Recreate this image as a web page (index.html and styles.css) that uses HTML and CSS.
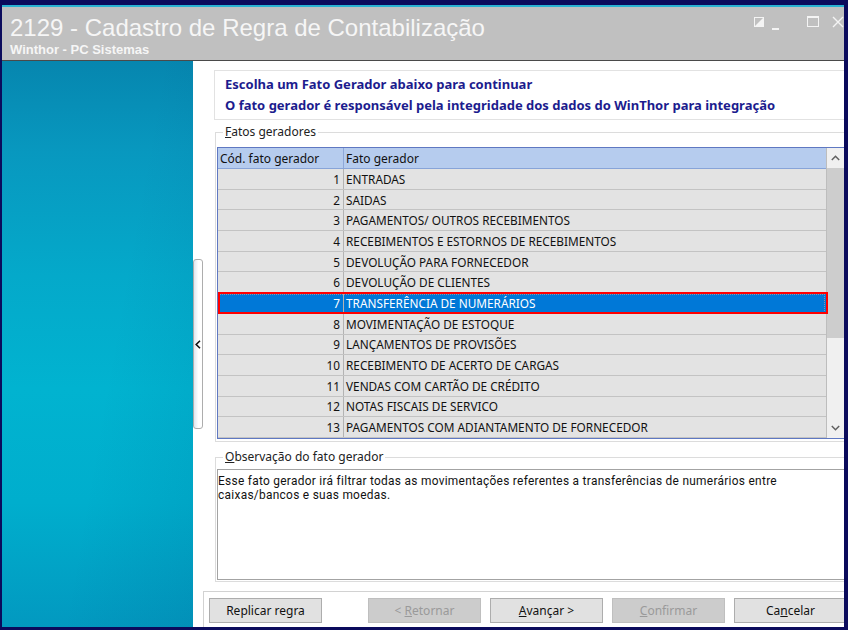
FILE: index.html
```html
<!DOCTYPE html>
<html lang="pt-BR">
<head>
<meta charset="utf-8">
<title>2129 - Cadastro de Regra de Contabilização</title>
<link rel="stylesheet" href="styles.css">
</head>
<body>
<div class="window">
  <header class="titlebar">
    <div class="title-text">
      <div class="title">2129 - Cadastro de Regra de Contabilização</div>
      <div class="subtitle">Winthor - PC Sistemas</div>
    </div>
    <div class="controls">
      <svg class="ctl ctl-dock" width="10" height="10" viewBox="0 0 10 10"><rect x="0.5" y="0.5" width="9" height="9" fill="none" stroke="#f4f4f4"/><polygon points="9,1 9,9 1,9" fill="#f4f4f4"/></svg>
      <svg class="ctl ctl-min" width="8" height="12" viewBox="0 0 8 12"><rect x="0" y="10" width="7" height="2" fill="#f4f4f4"/></svg>
      <svg class="ctl ctl-max" width="12" height="11" viewBox="0 0 12 11"><rect x="0.5" y="1" width="11" height="9.5" fill="none" stroke="#f4f4f4"/><rect x="0" y="0" width="12" height="2" fill="#f4f4f4"/></svg>
      <svg class="ctl ctl-close" width="12" height="12" viewBox="0 0 12 12"><path d="M1 1 L11 11 M11 1 L1 11" stroke="#f4f4f4" stroke-width="1.4"/></svg>
    </div>
  </header>

  <div class="main">
    <aside class="sidebar"></aside>
    <div class="grip-col">
      <div class="grip"><svg width="6" height="9" viewBox="0 0 6 9"><polyline points="5,0.8 1.2,4.5 5,8.2" fill="none" stroke="#111" stroke-width="1.6"/></svg></div>
    </div>

    <section class="content">
      <div class="intro">
        <div>Escolha um Fato Gerador abaixo para continuar</div>
        <div>O fato gerador é responsável pela integridade dos dados do WinThor para integração</div>
      </div>

      <fieldset class="group group-events">
        <legend><u>F</u>atos geradores</legend>
        <div class="grid">
          <div class="table">
            <div class="thead">
              <div class="cell num">Cód. fato gerador</div>
              <div class="cell name">Fato gerador</div>
            </div>
            <div class="row"><div class="cell num">1</div><div class="cell name">ENTRADAS</div></div>
            <div class="row"><div class="cell num">2</div><div class="cell name">SAIDAS</div></div>
            <div class="row"><div class="cell num">3</div><div class="cell name">PAGAMENTOS/ OUTROS RECEBIMENTOS</div></div>
            <div class="row"><div class="cell num">4</div><div class="cell name">RECEBIMENTOS E ESTORNOS DE RECEBIMENTOS</div></div>
            <div class="row"><div class="cell num">5</div><div class="cell name">DEVOLUÇÃO PARA FORNECEDOR</div></div>
            <div class="row"><div class="cell num">6</div><div class="cell name">DEVOLUÇÃO DE CLIENTES</div></div>
            <div class="row selected"><div class="cell num">7</div><div class="cell name">TRANSFERÊNCIA DE NUMERÁRIOS</div></div>
            <div class="row"><div class="cell num">8</div><div class="cell name">MOVIMENTAÇÃO DE ESTOQUE</div></div>
            <div class="row"><div class="cell num">9</div><div class="cell name">LANÇAMENTOS DE PROVISÕES</div></div>
            <div class="row"><div class="cell num">10</div><div class="cell name">RECEBIMENTO DE ACERTO DE CARGAS</div></div>
            <div class="row"><div class="cell num">11</div><div class="cell name">VENDAS COM CARTÃO DE CRÉDITO</div></div>
            <div class="row"><div class="cell num">12</div><div class="cell name">NOTAS FISCAIS DE SERVICO</div></div>
            <div class="row"><div class="cell num">13</div><div class="cell name">PAGAMENTOS COM ADIANTAMENTO DE FORNECEDOR</div></div>
          </div>
          <div class="scroll">
            <div class="arrow"><svg width="9" height="6" viewBox="0 0 9 6"><polyline points="0.8,5 4.5,1.3 8.2,5" fill="none" stroke="#606060" stroke-width="1.5"/></svg></div>
            <div class="thumb"></div>
            <div class="track"></div>
            <div class="arrow"><svg width="9" height="6" viewBox="0 0 9 6"><polyline points="0.8,1 4.5,4.7 8.2,1" fill="none" stroke="#606060" stroke-width="1.5"/></svg></div>
          </div>
        </div>
      </fieldset>

      <fieldset class="group group-notes">
        <legend><u>O</u>bservação do fato gerador</legend>
        <div class="memo">Esse fato gerador irá filtrar todas as movimentações referentes a transferências de numerários entre<br>caixas/bancos e suas moedas.</div>
      </fieldset>

      <div class="buttons">
        <button class="btn" type="button">Replicar regra</button>
        <button class="btn btn-back" type="button" disabled>&lt; <u>R</u>etornar</button>
        <button class="btn" type="button"><u>A</u>vançar &gt;</button>
        <button class="btn" type="button" disabled><u>C</u>onfirmar</button>
        <button class="btn" type="button">Ca<u>n</u>celar</button>
      </div>
    </section>
  </div>
</div>
</body>
</html>
```
FILE: styles.css
```css
* { box-sizing: border-box; }

html, body {
  margin: 0;
  height: 100%;
}

body {
  background: #0b0b5c;
  overflow: hidden;
  font-family: "Noto Sans", "DejaVu Sans", sans-serif;
  font-size: 12px;
  color: #111;
}

.window {
  margin: 5px 0 0 2px;
  width: 842px;
  height: 622px;
  border-top: 2px solid #2ab2d2;
  background: #fff;
  display: flex;
  flex-direction: column;
  overflow: hidden;
}

/* ---- title bar ---- */
.titlebar {
  height: 54px;
  flex: none;
  background: #c0c0c0;
  border-bottom: 1px solid #4a4a4a;
  display: flex;
  padding-left: 8px;
  color: #f6f6f6;
}

.title-text {
  display: flex;
  flex-direction: column;
  padding-top: 7px;
}

.title {
  font: 24px/28px "Liberation Sans", Arial, sans-serif;
}

.subtitle {
  font: bold 13px/15px "Liberation Sans", Arial, sans-serif;
}

.controls {
  margin-left: auto;
  display: flex;
  align-items: flex-start;
  padding-top: 9px;
}

.ctl { display: block; }
.ctl-dock { margin-top: 1px; }
.ctl-min { margin-left: 8px; margin-top: 2px; }
.ctl-max { margin-left: 27px; margin-top: 0; }
.ctl-close { margin-left: 13px; margin-top: 0; }

/* ---- body ---- */
.main {
  flex: 1;
  display: flex;
  min-height: 0;
}

.sidebar {
  width: 191px;
  flex: none;
  background:
    linear-gradient(100deg, rgba(0, 40, 90, 0) 55%, rgba(0, 40, 90, 0.08) 100%),
    linear-gradient(180deg, #0686af 0%, #0898bf 16%, #04a9ca 38%, #01b3d0 58%, #00aecd 78%, #0299c0 100%);
}

.grip-col {
  width: 10px;
  flex: none;
  display: flex;
  align-items: center;
}

.grip {
  width: 10px;
  height: 170px;
  border: 1px solid #adadad;
  border-radius: 3px;
  background: linear-gradient(90deg, #dde6ee 0%, #ffffff 55%);
  display: flex;
  align-items: center;
  justify-content: center;
}

.grip svg { display: block; margin-left: -1px; }

.content {
  flex: 1;
  min-width: 0;
  display: flex;
  flex-direction: column;
  overflow: hidden;
}

.intro {
  margin: 9px -4px 0 11px;
  border: 1px solid #e2e2e2;
  padding: 3px 10px;
  color: #1c1c8e;
  font-weight: bold;
  font-size: 13px;
  line-height: 21px;
  white-space: nowrap;
}

/* ---- group boxes ---- */
.group {
  margin: 4px -1px 0 12px;
  border: 1px solid #dcdcdc;
  border-right: none;
  padding: 7px 0 2px 1px;
  min-width: 0;
}

.group legend {
  margin-left: 6px;
  padding: 0 2px;
  line-height: 16px;
  font-size: 12px;
  color: #222;
}

.group-notes {
  margin-top: 7px;
  padding: 4px 0 1px 1px;
}

/* ---- grid ---- */
.grid {
  height: 292px;
  border: 1px solid #5f78c2;
  display: flex;
  background: #fff;
}

.table {
  flex: 1;
  display: flex;
  flex-direction: column;
  min-width: 0;
}

.thead {
  height: 21px;
  flex: none;
  display: flex;
  background: #b6ccee;
  border-bottom: 1px solid #88a4d8;
}

.thead .cell {
  display: flex;
  align-items: center;
  padding-left: 2px;
}

.thead .num {
  width: 126px;
  border-right: 1px solid #8ea8d8;
}

.row {
  flex: 1;
  display: flex;
  background: #e3e3e3;
  border-bottom: 1px solid #c3c3c3;
  position: relative;
  font-size: 11.8px;
}

.row .cell {
  display: flex;
  align-items: center;
  white-space: nowrap;
}

.row .num {
  width: 126px;
  flex: none;
  justify-content: flex-end;
  padding-right: 3px;
  border-right: 1px solid #b3b3b3;
}

.row .name {
  padding-left: 2px;
}

.row.selected {
  background: #0078d7;
  color: #fff;
}

.row.selected::before {
  content: "";
  position: absolute;
  inset: 1px 1px 0 1px;
  border: 1px dotted #8b96a6;
}

/* highlight frame round the chosen row */
.row.selected::after {
  content: "";
  position: absolute;
  left: 0;
  right: -2px;
  top: -1px;
  bottom: -1px;
  border: 2px solid #ff0000;
}

.scroll {
  width: 18px;
  flex: none;
  background: #f0f0f0;
  border-left: 1px solid #bdbdbd;
  display: flex;
  flex-direction: column;
}

.arrow {
  height: 20px;
  flex: none;
  display: flex;
  align-items: center;
  justify-content: center;
}

.thumb {
  height: 170px;
  flex: none;
  background: #cdcdcd;
}

.track { flex: 1; }

/* ---- notes ---- */
.memo {
  height: 111px;
  border: 1px solid #a3a3a3;
  padding: 4px 0 0 0;
  font-family: Roboto, "Noto Sans", sans-serif;
  font-size: 11.9px;
  letter-spacing: 0.29px;
  line-height: 14px;
  color: #111;
  white-space: nowrap;
}

/* ---- button bar ---- */
.buttons {
  margin-top: auto;
  height: 36px;
  flex: none;
  border-top: 1px solid #d2d2d2;
  border-left: 1px solid #d2d2d2;
  display: flex;
  gap: 9px;
  padding: 6px 0 0 5px;
}

.btn {
  width: 113px;
  height: 25px;
  flex: none;
  margin: 0;
  padding: 0;
  background: #e1e1e1;
  border: 1px solid #adadad;
  font-family: "Noto Sans", "DejaVu Sans", sans-serif;
  font-size: 12px;
  color: #111;
}

.btn:disabled {
  background: #cccccc;
  border-color: #bfbfbf;
  color: #9a9a9a;
}

.btn-back { margin-left: 37px; }
```
